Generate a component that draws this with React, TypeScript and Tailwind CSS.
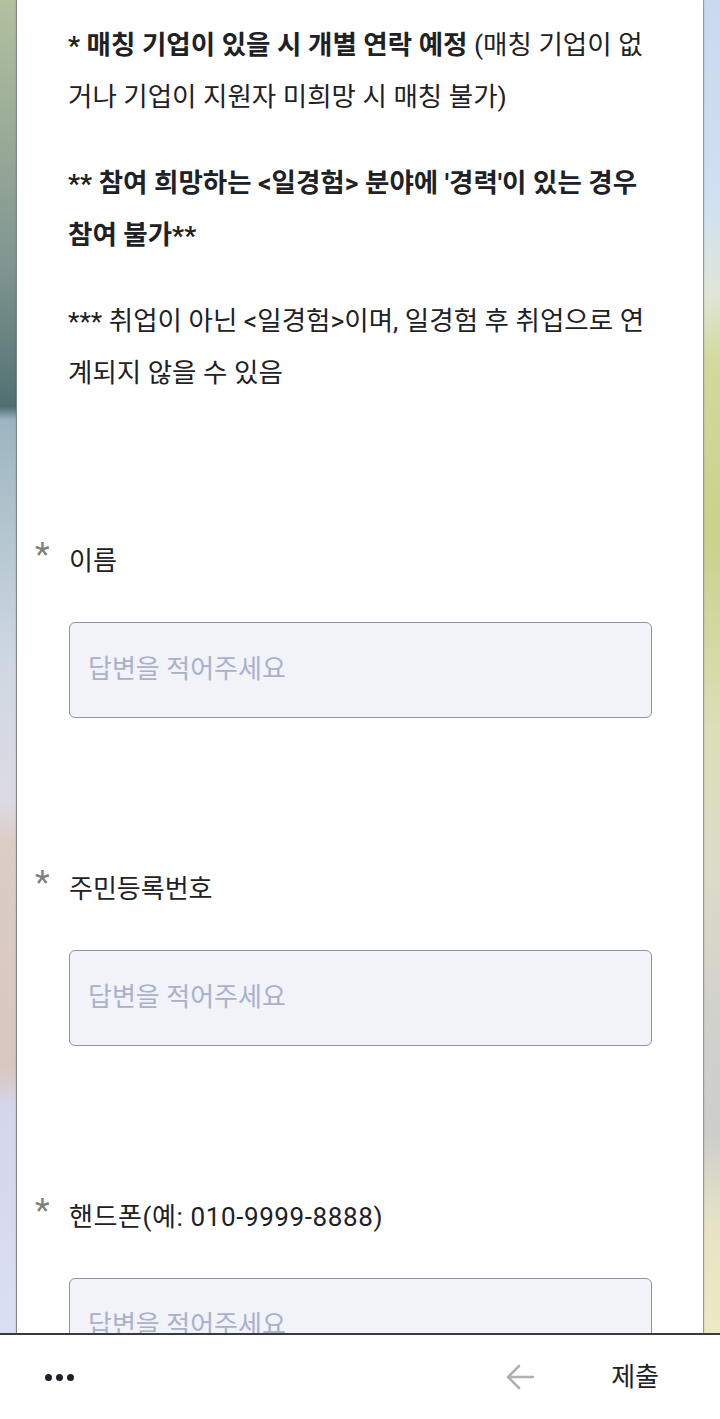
import React from "react";

const font = "font-['Roboto','Noto_Sans_CJK_KR',sans-serif]";

function Question({ label, wide }: { label: string; wide?: boolean }) {
  return (
    <div className="pl-[17px] pr-[51px]">
      <div className="flex h-[36px] items-center">
        <span className="w-[35px] text-[34px] leading-none text-[#808080] -mt-[14px] pl-[1px]">*</span>
        <span className={`text-[26px] leading-[36px] text-[#202124] ${wide ? "tracking-[0.6px]" : ""}`}>{label}</span>
      </div>
      <div className="ml-[35px] mt-[43px] h-[96px] rounded-[6px] border-[1.5px] border-[#8a93a8] bg-[#f1f3f8] flex items-center pl-[18px]">
        <span className="text-[26px] text-[#a9b1c9] -mt-[2px]">답변을 적어주세요</span>
      </div>
    </div>
  );
}

export default function App() {
  return (
    <div className={`w-[720px] h-[1419px] flex flex-col overflow-hidden bg-white ${font}`}>
      <div className="flex h-[1333px] shrink-0 overflow-hidden">
        <div className="w-[17px] shrink-0 border-r border-[#8d9598] bg-[linear-gradient(to_bottom,#b2c19e_0%,#9aab98_10%,#7f9590_20%,#587676_29%,#4f6e70_30.5%,#9cb5c0_31.5%,#b4c6d0_40%,#cfd8e2_50%,#dcdbe4_60%,#dccdc8_63%,#d8c6c0_80%,#d4d6ec_83%,#dadff2_100%)]" />
        <div className="flex-1 bg-white relative z-10 shadow-[0_0_3px_rgba(0,0,0,0.25)]">
          <div className="pl-[51px] pt-[19px] text-[26.5px] leading-[52px] text-[#202124] whitespace-nowrap">
            <p>
              <b className="font-bold">* 매칭 기업이 있을 시 개별 연락 예정</b> (매칭 기업이 없
              <br />
              거나 기업이 지원자 미희망 시 매칭 불가)
            </p>
            <p className="mt-[34px] font-bold">
              ** 참여 희망하는 &lt;일경험&gt; 분야에 '경력'이 있는 경우
              <br />
              참여 불가**
            </p>
            <p className="mt-[34px]">
              *** 취업이 아닌 &lt;일경험&gt;이며, 일경험 후 취업으로 연
              <br />
              계되지 않을 수 있음
            </p>
          </div>
          <div className="mt-[144px] flex flex-col gap-[153px]">
            <Question label="이름" />
            <Question label="주민등록번호" />
            <Question label="핸드폰(예: 010-9999-8888)" wide />
          </div>
        </div>
        <div className="w-[17px] shrink-0 border-l border-[#a8aaa8] bg-[linear-gradient(to_bottom,#c9daf0_0%,#cfe0f2_15%,#dfe6d8_22%,#d2da9c_27%,#c9d18a_40%,#dcdfb8_55%,#dcdcc8_65%,#d2d2cc_75%,#cdcdcc_85%,#e6e4c4_92%,#ede9c4_100%)]" />
      </div>
      <div className="flex-1 border-t-2 border-[#3a3a3a] bg-white flex items-center pl-[45px] pr-[61px]">
        <div className="flex gap-[4px]">
          <div className="w-[7px] h-[7px] rounded-full bg-[#202124]" />
          <div className="w-[7px] h-[7px] rounded-full bg-[#202124]" />
          <div className="w-[7px] h-[7px] rounded-full bg-[#202124]" />
        </div>
        <div className="flex-1" />
        <svg width="30" height="26" viewBox="0 0 30 26" className="mr-[76px]">
          <path d="M28 13 H3 M14 2 L3 13 L14 24" fill="none" stroke="#b0b0b0" strokeWidth="2.6" strokeLinecap="round" strokeLinejoin="round" />
        </svg>
        <span className="text-[26px] text-[#202124]">제출</span>
      </div>
    </div>
  );
}
